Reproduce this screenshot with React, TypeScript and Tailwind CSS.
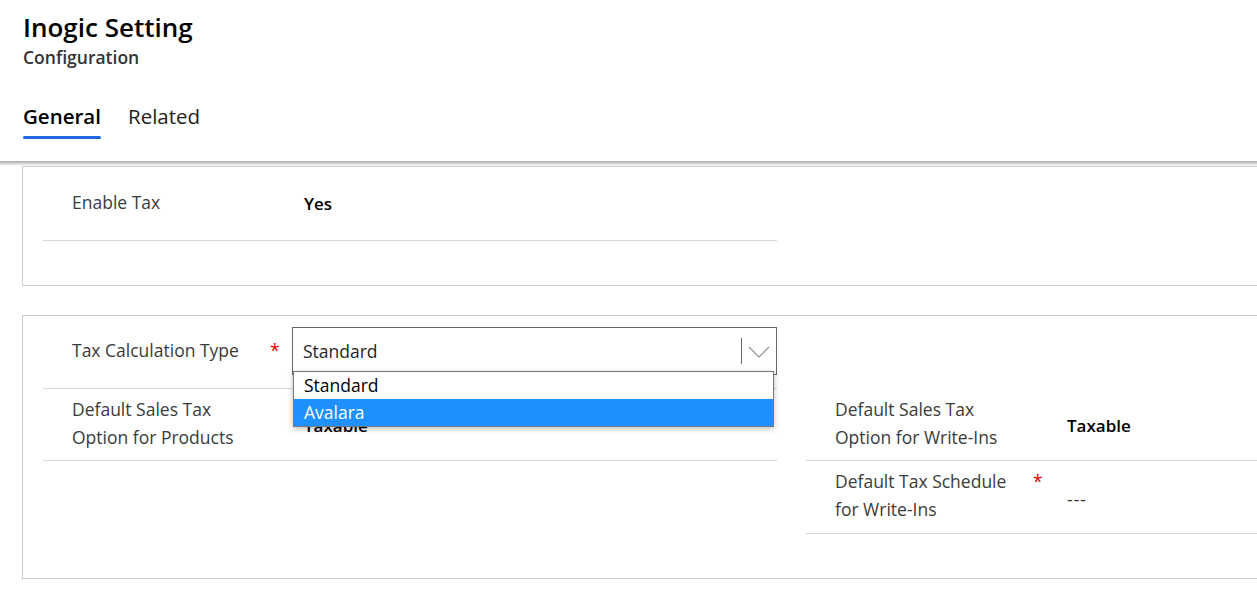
import React from "react";

const LABEL = "text-[17.5px] leading-[28px] text-[#3b3b3b]";
const VALUE = "text-[17px] leading-[28px] font-semibold text-black";

function Required() {
  return <span className="text-[17.5px] leading-[28px] text-[#d00] pl-[8px]">*</span>;
}

function FieldRow({
  label,
  required,
  height,
  children,
}: {
  label: string;
  required?: boolean;
  height: string;
  children?: React.ReactNode;
}) {
  return (
    <div className={`flex items-center border-b border-[#d8d8d8] pl-[29px] ${height}`}>
      <div className="flex w-[220px] shrink-0 items-start pb-[4px]">
        <span className={`w-[190px] ${LABEL}`}>{label}</span>
        {required && <Required />}
      </div>
      <div className="flex-1">{children}</div>
    </div>
  );
}

function Chevron() {
  return (
    <svg width="22" height="12" viewBox="0 0 22 12" fill="none">
      <polyline points="1,1 11,11 21,1" stroke="#8c8c8c" strokeWidth="1.1" />
    </svg>
  );
}

function TaxTypeSelect() {
  return (
    <div className="relative mb-[2px] w-[485px]">
      <div className="flex h-[48px] items-center border border-[#666] bg-white">
        <span className="flex-1 pl-[10px] text-[17.5px] text-[#1f1f1f]">Standard</span>
        <span className="h-[26px] w-px bg-[#666]" />
        <span className="flex w-[34px] justify-center pt-[2px]">
          <Chevron />
        </span>
      </div>
      {/* open option list */}
      <div className="absolute left-[1px] top-[44px] z-10 w-[481px] border border-[#777] bg-white shadow-[0_2px_6px_rgba(0,0,0,0.25)]">
        <div className="h-[27px] pl-[10px] text-[17.5px] leading-[27px] text-black">Standard</div>
        <div className="h-[27px] bg-[#1e90ff] pl-[10px] text-[17.5px] leading-[27px] text-white">Avalara</div>
      </div>
    </div>
  );
}

export default function App() {
  return (
    <div className="h-[603px] w-[1257px] overflow-hidden bg-white font-['Open_Sans',sans-serif]">
      <header className="relative h-[161px] px-[23px] pt-[10px]">
        <h1 className="text-[26px] font-semibold leading-[34px] text-black">Inogic Setting</h1>
        <p className="mt-[1px] text-[17.5px] font-semibold leading-[24px] text-[#333]">Configuration</p>
        <nav className="mt-[33px] flex gap-[27px]">
          <div className="flex flex-col">
            <span className="text-[20.5px] font-semibold leading-[28px] text-black">General</span>
            <span className="mt-[6px] h-[3px] rounded-full bg-[#2266e3]" />
          </div>
          <span className="text-[20.5px] leading-[28px] text-[#222]">Related</span>
        </nav>
      </header>
      <div className="h-[5px] bg-linear-to-b from-[#a9a9a9] to-white" />

      <section className="ml-[22px] h-[120px] w-[1560px] border border-[#cbcbcb] pl-[20px]">
        <div className="w-[734px]">
          <FieldRow label="Enable Tax" height="h-[74px]">
            <span className={`pl-[12px] ${VALUE}`}>Yes</span>
          </FieldRow>
        </div>
      </section>

      <section className="ml-[22px] mt-[29px] flex h-[264px] w-[1560px] gap-[29px] border border-[#cbcbcb] pl-[20px]">
        <div className="w-[734px]">
          <FieldRow label="Tax Calculation Type" required height="h-[73px]">
            <TaxTypeSelect />
          </FieldRow>
          <FieldRow label="Default Sales Tax Option for Products" height="h-[72px]">
            <span className={`block pl-[12px] pt-[3px] ${VALUE}`}>Taxable</span>
          </FieldRow>
        </div>
        <div className="w-[734px] pt-[73px]">
          <FieldRow label="Default Sales Tax Option for Write-Ins" height="h-[72px]">
            <span className={`block pl-[12px] pt-[3px] ${VALUE}`}>Taxable</span>
          </FieldRow>
          <FieldRow label="Default Tax Schedule for Write-Ins" required height="h-[73px]">
            <span className="block pl-[12px] pt-[4px] text-[17.5px] leading-[28px] tracking-[1px] text-[#333]">---</span>
          </FieldRow>
        </div>
      </section>
    </div>
  );
}
